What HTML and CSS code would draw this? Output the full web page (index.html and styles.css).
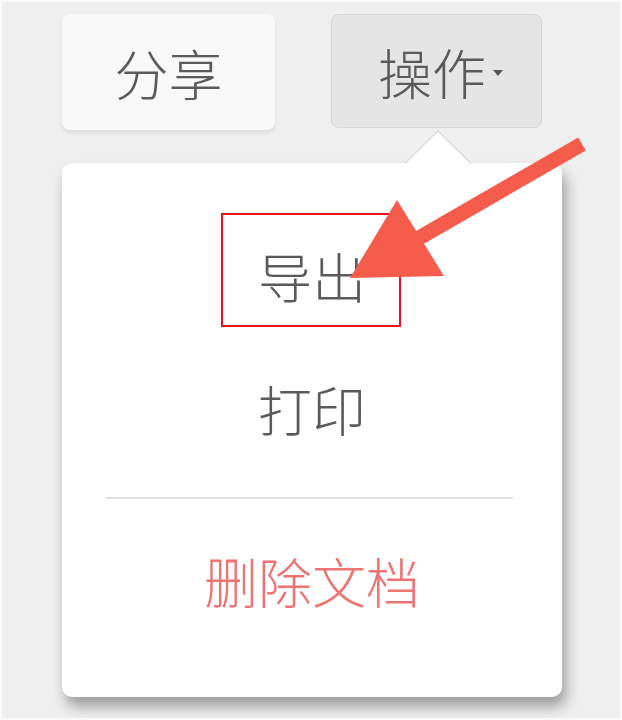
FILE: index.html
```html
<!DOCTYPE html>
<html lang="zh-CN">
<head>
    <meta charset="UTF-8">
    <meta name="viewport" content="width=device-width, initial-scale=1.0">
    <title>文档操作</title>
    <link rel="stylesheet" href="styles.css">
</head>
<body>
    <div class="stage">
        <div class="toolbar">
            <button class="btn btn-share">分享</button>
            <button class="btn btn-ops">操作<span class="caret"></span></button>
        </div>

        <div class="menu">
            <!-- 小三角 -->
            <svg class="menu-tip" width="66" height="34" viewBox="0 0 66 34">
                <polygon points="0,34 33,1 66,34" fill="#fff"/>
                <polyline points="0,33.5 33,1 66,33.5" fill="none" stroke="#dcdcdc" stroke-width="1.5"/>
            </svg>
            <div class="menu-item">导出</div>
            <div class="menu-item">打印</div>
            <div class="menu-divider"></div>
            <div class="menu-item danger">删除文档</div>
        </div>

        <!-- 标注 -->
        <div class="mark-box"></div>
        <svg class="mark-arrow" width="622" height="720" viewBox="0 0 622 720">
            <line x1="412" y1="242" x2="582" y2="144" stroke="#f65c4c" stroke-width="15"/>
            <polygon points="350,278 397,200 444,276" fill="#f65c4c"/>
        </svg>
    </div>
</body>
</html>
```

FILE: styles.css
```css
html {
    background: #fafafa;
}

body {
    margin: 0;
    padding: 2px;
    font-family: "Microsoft YaHei", "Noto Sans CJK SC", sans-serif;
}

.stage {
    position: relative;
    height: 716px;
    background: #efefef;
    overflow: hidden;
}

.toolbar {
    display: flex;
    gap: 56px;
    padding: 12px 0 0 60px;
}

.btn {
    font-family: inherit;
    font-size: 54px;
    font-weight: 300;
    color: #5a5a5a;
    border-radius: 8px;
    cursor: pointer;
    display: flex;
    align-items: center;
    justify-content: center;
}

.btn-share {
    width: 213px;
    height: 116px;
    background: #f8f8f8;
    border: none;
    box-shadow: 0 3px 4px rgba(0, 0, 0, 0.08);
}

.btn-ops {
    width: 211px;
    height: 114px;
    background: #e5e5e5;
    border: 1px solid #d6d6d6;
    padding: 0 14px 0 22px;
}

.caret {
    display: inline-block;
    margin-left: 7px;
    margin-top: 4px;
    border-left: 5px solid transparent;
    border-right: 5px solid transparent;
    border-top: 6px solid #555;
}

.menu {
    position: relative;
    margin: 33px 0 0 60px;
    width: 500px;
    height: 534px;
    padding-top: 46px;
    box-sizing: border-box;
    background: #fff;
    border-radius: 10px;
    box-shadow: 4px 10px 14px rgba(0, 0, 0, 0.34);
}

.menu-tip {
    position: absolute;
    top: -33px;
    left: 343px;
}

.menu-item {
    height: 133px;
    display: flex;
    align-items: center;
    justify-content: center;
    font-size: 54px;
    font-weight: 300;
    color: #5a5a5a;
}

.menu-item.danger {
    color: #ee7474;
}

.menu-divider {
    height: 2px;
    background: #dedede;
    margin: 22px 49px 15px 44px;
}

.mark-box {
    position: absolute;
    left: 219px;
    top: 211px;
    width: 176px;
    height: 110px;
    border: 2px solid #e8141c;
}

.mark-arrow {
    position: absolute;
    left: -2px;
    top: -2px;
}
```
